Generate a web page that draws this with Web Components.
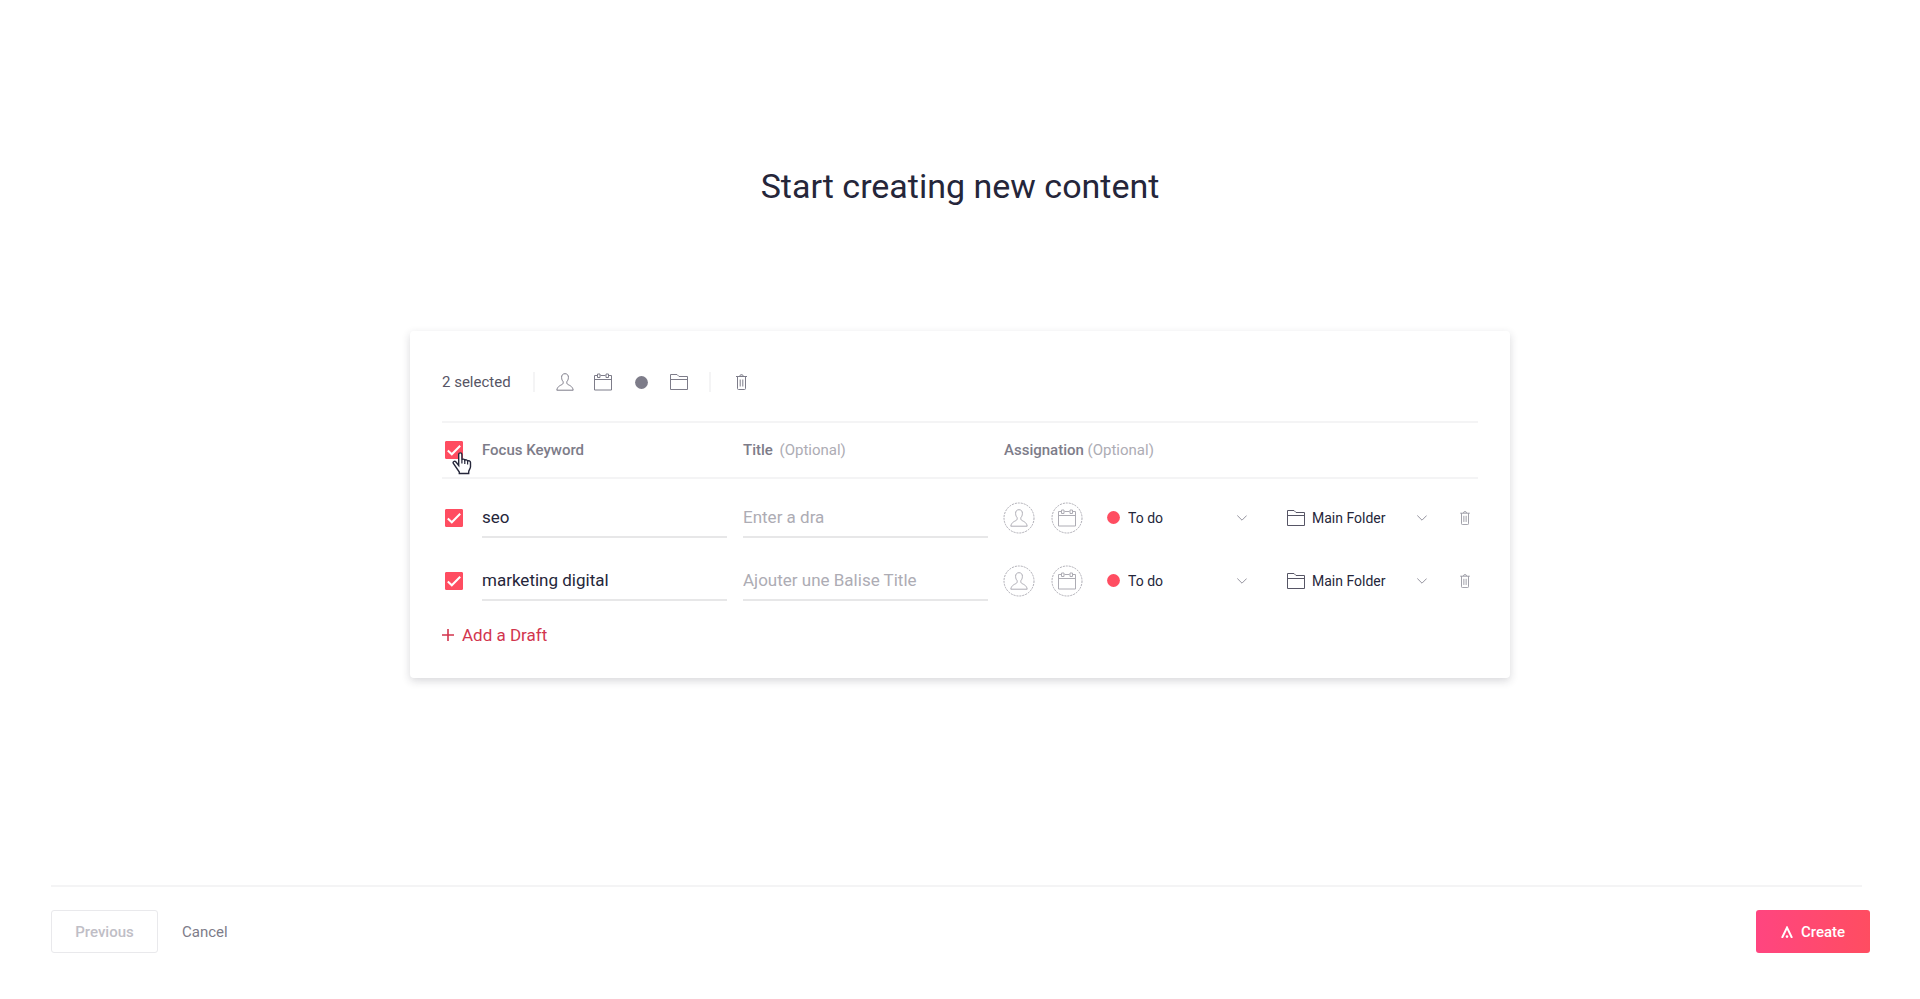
<!DOCTYPE html>
<html lang="en">
<head>
<meta charset="utf-8">
<meta name="viewport" content="width=device-width, initial-scale=1">
<title>Start creating new content</title>
<style>
  body {
    margin: 0;
    background: #fff;
    color: #25263a;
    font-family: Roboto, "Liberation Sans", sans-serif;
    --accent: #ff4d61;
    --muted: #7d7c89;
    --light: #adacb4;
    --line: #f4f4f5;
  }
</style>
</head>
<body>
<create-page></create-page>

<script>
const ICONS = {
  user: [18, 18, '<path d="M9 .7C6.800 .7 5.500 2.200 5.600 4.500c.1 1.900.6 3 1.400 3.900.4 1 .2 2.100-.4 2.700C5.300 12.300 1.500 12.700 .8 17.200h16.400c-.7-4.500-4.500-4.900-5.800-6.100-.6-.6-.8-1.700-.4-2.700.8-.9 1.300-2 1.400-3.900C12.500 2.200 11.200 .7 9 .7z"/>'],
  calendar: [18, 18, '<path d="M3.500 2.500h-3v14.500h17V2.500h-3M6.500 2.500h5M.5 6.500h17M3.500 1h2.500v3.500H3.500zM12 1h2.500v3.500H12z"/>'],
  folder: [18, 18, '<path d="M.5 16.500v-15h6.500l2 2h8.500v13zM.5 6.500h17"/>'],
  trash: [11, 16, '<path d="M0 2.500h11M3.500 2.500l1-1.700h2l1 1.700M1.500 2.500v12q0 1 1 1h6q1 0 1-1v-12M4.200 5.500v7M6.800 5.500v7"/>'],
  chevron: [10, 6, '<path d="M.3 .5L5 5.200 9.700 .5"/>'],
  dot: [13, 13, '<circle cx="6.500" cy="6.500" r="6.400" fill="currentColor" stroke="none"/>'],
  plus: [12, 12, '<path d="M6 0v12M0 6h12" stroke-width="1.600"/>'],
  logo: [12, 12, '<path d="M1 11.900L6 1.600l5 10.300" stroke-width="2"/><circle cx="6" cy="10.600" r="1.300" fill="currentColor" stroke="none"/>'],
  pointer: [20, 23, '<path d="M6.700 13.500V2.500c0-2.200 3.200-2.200 3.200 0v5.300c.5-1.100 2.700-.9 2.900.5.700-.9 2.600-.6 2.800.8 1-.7 2.900-.2 2.900 1.500v4.200c0 2-1.800 3.200-1.800 5.200v1.500H7.300v-1.500L1.400 11.500c-1-1.800 1.200-3 2.600-1.500z" fill="#fff" stroke-width="1.400"/><path d="M9.900 7.500v4M12.800 8.500v3.500M15.600 9.500v3" stroke-width="1.200"/>'],
};

class UiIcon extends HTMLElement {
  constructor() {
    super();
    this.attachShadow({ mode: "open" });
  }

  connectedCallback() {
    const [w, h, shape] = ICONS[this.getAttribute("name")];
    const height = Number(this.getAttribute("height") ?? h);
    const width = Math.round(w * height / h);
    this.shadowRoot.innerHTML = /* html */`
    <style>
      :host { display: inline-flex; flex: none; }
      svg { display: block; }
    </style>
    <svg width="${width}" height="${height}" viewBox="0 0 ${w} ${h}" fill="none" stroke="currentColor" stroke-width="1" aria-hidden="true">${shape}</svg>`;
  }
}

class IconButton extends HTMLElement {
  constructor() {
    super();
    this.attachShadow({ mode: "open" });
  }

  connectedCallback() {
    const icon = this.getAttribute("icon");
    const height = this.getAttribute("height");
    const ring = this.hasAttribute("ring")
      ? '<svg width="32" height="32"><circle cx="16" cy="16" r="15" fill="none" stroke="currentColor" stroke-dasharray="2 1"/></svg>'
      : "";
    this.shadowRoot.innerHTML = /* html */`
    <style>
      :host { display: inline-flex; flex: none; --width: 24px; --height: 24px; }
      :host([ring]) { --width: 32px; --height: 32px; }
      :host([small]) { --width: 10px; }
      button {
        display: grid;
        place-items: center;
        width: var(--width);
        height: var(--height);
        padding: 0;
        border: 0;
        background: none;
        color: inherit;
        cursor: pointer;
      }
      button > * { grid-area: 1 / 1; }
    </style>
    <button type="button" aria-label="${this.getAttribute("label")}">
      ${ring}
      <ui-icon name="${icon}" ${height ? `height="${height}"` : ""}></ui-icon>
    </button>`;
  }
}

class CheckBox extends HTMLElement {
  constructor() {
    super();
    this.attachShadow({ mode: "open" });
  }

  connectedCallback() {
    this.shadowRoot.innerHTML = /* html */`
    <style>
      :host { display: block; width: 18px; height: 18px; }
      label { display: grid; }
      label > * { grid-area: 1 / 1; }
      input {
        appearance: none;
        width: 18px;
        height: 18px;
        margin: 0;
        border: 1px solid var(--light);
        border-radius: 1px;
      }
      input:checked { background: var(--accent); border-color: var(--accent); }
      svg { pointer-events: none; }
      input:not(:checked) + svg { visibility: hidden; }
    </style>
    <label>
      <input type="checkbox" aria-label="${this.getAttribute("label")}" checked>
      <svg width="18" height="18" fill="none" stroke="#fff" stroke-width="2"><path d="M2.800 9.500l4 3.800 8.400-8.600"/></svg>
    </label>`;
  }
}

class IconSelect extends HTMLElement {
  constructor() {
    super();
    this.attachShadow({ mode: "open" });
  }

  connectedCallback() {
    this.shadowRoot.innerHTML = /* html */`
    <style>
      :host {
        display: grid;
        grid-template-columns: 1fr 10px;
        align-items: center;
        width: 140px;
        --indent: 21px;
      }
      :host([wide]) { --indent: 25px; }
      slot, select, ui-icon { grid-row: 1; }
      slot { display: flex; grid-column: 1; z-index: 1; pointer-events: none; }
      ui-icon { grid-column: 2; color: #94939e; pointer-events: none; }
      select {
        grid-column: 1 / -1;
        appearance: none;
        width: 100%;
        height: 32px;
        padding: 0 10px 0 var(--indent);
        border: 0;
        background: none;
        color: inherit;
        font: 14px/20px Roboto, "Liberation Sans", sans-serif;
      }
    </style>
    <select aria-label="${this.getAttribute("label")}"><option>${this.getAttribute("value")}</option></select>
    <slot></slot>
    <ui-icon name="chevron"></ui-icon>`;
  }
}

class BulkToolbar extends HTMLElement {
  constructor() {
    super();
    this.attachShadow({ mode: "open" });
  }

  connectedCallback() {
    this.shadowRoot.innerHTML = /* html */`
    <style>
      :host {
        display: flex;
        align-items: center;
        gap: 18px;
        height: 40px;
        padding-bottom: 19px;
        color: var(--muted);
      }
      .count { min-width: 73px; color: #565565; font-size: 15px; line-height: 20px; }
      .separator { width: 2px; height: 20px; background: var(--line); }
      .actions { display: flex; gap: 14px; }
    </style>
    <span class="count">2 selected</span>
    <span class="separator"></span>
    <div class="actions">
      <icon-button icon="user" label="Assign"></icon-button>
      <icon-button icon="calendar" label="Set a due date"></icon-button>
      <icon-button icon="dot" label="Set status"></icon-button>
      <icon-button icon="folder" label="Move to folder"></icon-button>
    </div>
    <span class="separator"></span>
    <icon-button icon="trash" label="Delete selected"></icon-button>`;
  }
}

class DraftTable extends HTMLElement {
  constructor() {
    super();
    this.attachShadow({ mode: "open" });
    this.drafts = [
      { keyword: "seo", placeholder: "Enter a dra" },
      { keyword: "marketing digital", placeholder: "Ajouter une Balise Title" },
    ];
  }

  static get styles() {
    return /* css */`
      :host { display: block; }
      table { width: 100%; table-layout: fixed; border-collapse: separate; border-spacing: 0; }
      col.check { width: 40px; }
      col.field { width: 261px; }
      th, td { padding: 0; text-align: left; }
      th {
        height: 54px;
        border: solid var(--line);
        border-width: 2px 0;
        color: var(--muted);
        font-size: 15px;
        font-weight: 500;
        line-height: 20px;
      }
      th span { color: var(--light); font-weight: 400; }
      th .apart { margin-left: 3px; }
      td { height: 63px; }
      tbody::before { content: ""; display: table-row; height: 7px; }
      check-box { margin-left: 3px; }
      .select-all { position: relative; }
      .pointer { position: absolute; left: 10px; top: 29px; color: #25263a; }
      input {
        display: block;
        box-sizing: border-box;
        width: calc(100% - 16px);
        height: 40px;
        padding: 0;
        border: 0;
        border-bottom: 2px solid #e7e7e8;
        background: none;
        color: inherit;
        font: 17px/24px Roboto, "Liberation Sans", sans-serif;
        outline: 0;
      }
      input::placeholder { color: var(--light); opacity: 1; }
      .assignation { display: flex; align-items: center; margin-left: -1px; color: var(--light); }
      .assignation > :nth-child(2) { margin: 0 24px 0 16px; }
      .assignation > :last-child { margin: 0 8px 0 auto; color: #94939e; }
      icon-select { margin-right: 40px; color: #25263a; }
      icon-select[wide] { margin-right: 0; }
      .status { color: var(--accent); }
      .folder { color: #565565; }
    `;
  }

  row({ keyword, placeholder }) {
    return /* html */`
    <tr>
      <td><check-box label="Select ${keyword}"></check-box></td>
      <td><input type="text" aria-label="Focus Keyword" value="${keyword}"></td>
      <td><input type="text" aria-label="Title" placeholder="${placeholder}"></td>
      <td>
        <div class="assignation">
          <icon-button ring icon="user" label="Assign"></icon-button>
          <icon-button ring icon="calendar" label="Set a due date"></icon-button>
          <icon-select label="Status" value="To do"><ui-icon class="status" name="dot"></ui-icon></icon-select>
          <icon-select wide label="Folder" value="Main Folder"><ui-icon class="folder" name="folder"></ui-icon></icon-select>
          <icon-button small icon="trash" height="14" label="Delete"></icon-button>
        </div>
      </td>
    </tr>`;
  }

  connectedCallback() {
    this.shadowRoot.innerHTML = /* html */`
    <style>${DraftTable.styles}</style>
    <table>
      <colgroup><col class="check"><col class="field"><col class="field"><col></colgroup>
      <thead>
        <tr>
          <th class="select-all"><check-box label="Select all"></check-box><ui-icon class="pointer" name="pointer"></ui-icon></th>
          <th>Focus Keyword</th>
          <th>Title <span class="apart">(Optional)</span></th>
          <th>Assignation <span>(Optional)</span></th>
        </tr>
      </thead>
      <tbody>${this.drafts.map((draft) => this.row(draft)).join("")}</tbody>
    </table>`;
  }
}

class DraftCard extends HTMLElement {
  constructor() {
    super();
    this.attachShadow({ mode: "open" });
  }

  connectedCallback() {
    this.shadowRoot.innerHTML = /* html */`
    <style>
      :host {
        display: block;
        box-sizing: border-box;
        width: 100%;
        max-width: 1100px;
        padding: 31px 32px;
        border-radius: 4px;
        background: #fff;
        box-shadow: 0 3px 8px rgba(37, 38, 58, .18);
      }
      .add {
        display: flex;
        align-items: center;
        gap: 8px;
        margin-top: 11px;
        padding: 0;
        border: 0;
        background: none;
        color: #d2354e;
        font: 17px/24px Roboto, "Liberation Sans", sans-serif;
        cursor: pointer;
      }
    </style>
    <bulk-toolbar></bulk-toolbar>
    <draft-table></draft-table>
    <button class="add" type="button"><ui-icon name="plus"></ui-icon>Add a Draft</button>`;
  }
}

class WizardFooter extends HTMLElement {
  constructor() {
    super();
    this.attachShadow({ mode: "open" });
  }

  connectedCallback() {
    this.shadowRoot.innerHTML = /* html */`
    <style>
      :host { display: block; padding: 0 50px 46px 51px; }
      hr { height: 2px; margin: 0 8px 23px 0; border: 0; background: var(--line); }
      .bar { display: flex; align-items: center; }
      button {
        box-sizing: border-box;
        height: 43px;
        padding: 0;
        border: 0;
        border-radius: 3px;
        background: none;
        font: 500 15px/20px Roboto, "Liberation Sans", sans-serif;
      }
      .previous { width: 107px; border: 1px solid #e9e9ec; color: #bfbec6; }
      .cancel { margin-left: 24px; color: var(--muted); font-weight: 400; }
      .create {
        display: flex;
        align-items: center;
        justify-content: center;
        gap: 8px;
        width: 114px;
        margin-left: auto;
        background: linear-gradient(90deg, #ff4580, #ff4d61);
        color: #fff;
      }
    </style>
    <hr>
    <div class="bar">
      <button class="previous" type="button" disabled>Previous</button>
      <button class="cancel" type="button">Cancel</button>
      <button class="create" type="button"><ui-icon name="logo"></ui-icon>Create</button>
    </div>`;
  }
}

class CreatePage extends HTMLElement {
  constructor() {
    super();
    this.attachShadow({ mode: "open" });
  }

  connectedCallback() {
    this.shadowRoot.innerHTML = /* html */`
    <style>
      :host { display: flex; flex-direction: column; min-height: 100vh; }
      main { display: flex; flex-direction: column; align-items: center; padding: 166px 24px 48px; }
      h1 { margin: 0 0 125px; font-size: 34px; font-weight: 400; line-height: 40px; }
      wizard-footer { margin-top: auto; }
    </style>
    <main>
      <h1>Start creating new content</h1>
      <draft-card></draft-card>
    </main>
    <wizard-footer></wizard-footer>`;
  }
}

customElements.define("ui-icon", UiIcon);
customElements.define("icon-button", IconButton);
customElements.define("check-box", CheckBox);
customElements.define("icon-select", IconSelect);
customElements.define("bulk-toolbar", BulkToolbar);
customElements.define("draft-table", DraftTable);
customElements.define("draft-card", DraftCard);
customElements.define("wizard-footer", WizardFooter);
customElements.define("create-page", CreatePage);
</script>
</body>
</html>
